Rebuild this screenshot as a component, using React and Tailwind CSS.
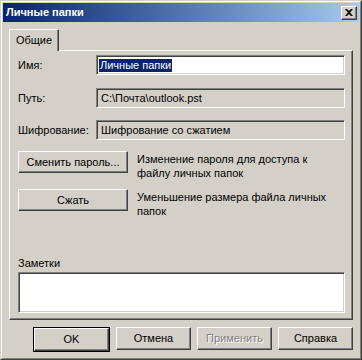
import React from 'react';

const raised =
    'bg-[#d4d0c8] border border-t-white border-l-white border-r-[#404040] border-b-[#404040] shadow-[inset_-1px_-1px_0_#808080]';
const sunken =
    'border border-t-[#808080] border-l-[#808080] border-r-white border-b-white shadow-[inset_1px_1px_0_#404040,inset_-1px_-1px_0_#d4d0c8]';

function Button({ children, className = '', disabled = false }) {
    return (
        <div className={`flex items-center justify-center h-[23px] w-[75px] ${raised} ${className}`}>
            <span className={disabled ? 'text-[#808080] [text-shadow:1px_1px_0_#fff]' : 'text-black'}>{children}</span>
        </div>
    );
}

function Field({ label, children }) {
    return (
        <div className="flex items-center">
            <div className="w-[78px] shrink-0">{label}</div>
            {children}
        </div>
    );
}

export default function App() {
    return (
        <div className="w-[362px] h-[360px] bg-[#d4d0c8] border border-t-[#d4d0c8] border-l-[#d4d0c8] border-r-[#404040] border-b-[#404040] font-['Liberation_Sans',Arial,sans-serif] text-[11px] text-black leading-[13px] select-none">
            <div className="h-full border border-t-white border-l-white border-r-[#808080] border-b-[#808080] p-px flex flex-col">
                {/* title bar */}
                <div className="h-[19px] shrink-0 flex items-center justify-between pl-[3px] pr-[2px] bg-gradient-to-r from-[#0a246a] to-[#a6caf0]">
                    <span className="text-white font-bold">Личные папки</span>
                    <div className={`w-[16px] h-[14px] flex items-center justify-center ${raised}`}>
                        <svg width="8" height="7" viewBox="0 0 8 7">
                            <path d="M0 0h2l2 2 2-2h2L5 3.5 8 7H6L4 5 2 7H0l3-3.5z" fill="#000" />
                        </svg>
                    </div>
                </div>

                <div className="flex-1 flex flex-col px-[6px] pt-[7px]">
                    {/* tab */}
                    <div className="flex">
                        <div className="relative z-10 h-[22px] w-[50px] -mb-px bg-[#d4d0c8] border-t border-l border-r border-t-white border-l-white border-r-[#404040] shadow-[inset_-1px_0_0_#808080] flex items-center justify-center">
                            Общие
                        </div>
                    </div>

                    {/* panel */}
                    <div className="h-[270px] border border-t-white border-l-white border-r-[#404040] border-b-[#404040] shadow-[inset_-1px_-1px_0_#808080] pl-[8px] pr-[7px] pt-[4px] pb-[6px] flex flex-col">
                        <Field label="Имя:">
                            <div className={`flex-1 h-[20px] bg-white flex items-center pl-[2px] ${sunken}`}>
                                <span className="bg-[#0a246a] text-white px-px">Личные папки</span>
                            </div>
                        </Field>
                        <div className="mt-[13px]">
                            <Field label="Путь:">
                                <div className={`flex-1 h-[20px] flex items-center pl-[4px] ${sunken}`}>C:\Почта\outlook.pst</div>
                            </Field>
                        </div>
                        <div className="mt-[12px]">
                            <Field label="Шифрование:">
                                <div className={`flex-1 h-[20px] flex items-center pl-[4px] ${sunken}`}>Шифрование со сжатием</div>
                            </Field>
                        </div>

                        <div className="mt-[11px] flex items-start gap-[9px]">
                            <div className={`w-[110px] h-[22px] shrink-0 flex items-center justify-center ${raised}`}>Сменить пароль...</div>
                            <div className="pt-px leading-[14px]">Изменение пароля для доступа к<br />файлу личных папок</div>
                        </div>
                        <div className="mt-[9px] flex items-start gap-[9px]">
                            <div className={`w-[110px] h-[22px] shrink-0 flex items-center justify-center ${raised}`}>Сжать</div>
                            <div className="pt-px leading-[14px]">Уменьшение размера файла личных<br />папок</div>
                        </div>

                        <div className="mt-auto">
                            <div className="h-[13px] mb-[2px]">Заметки</div>
                            <div className={`h-[41px] bg-white ${sunken}`} />
                        </div>
                    </div>

                    {/* dialog buttons */}
                    <div className="mt-[7px] flex justify-end gap-[6px]">
                        <div className="border border-black">
                            <Button className="w-[73px] h-[21px]">OK</Button>
                        </div>
                        <Button>Отмена</Button>
                        <Button disabled>Применить</Button>
                        <Button>Справка</Button>
                    </div>
                </div>
            </div>
        </div>
    );
}
